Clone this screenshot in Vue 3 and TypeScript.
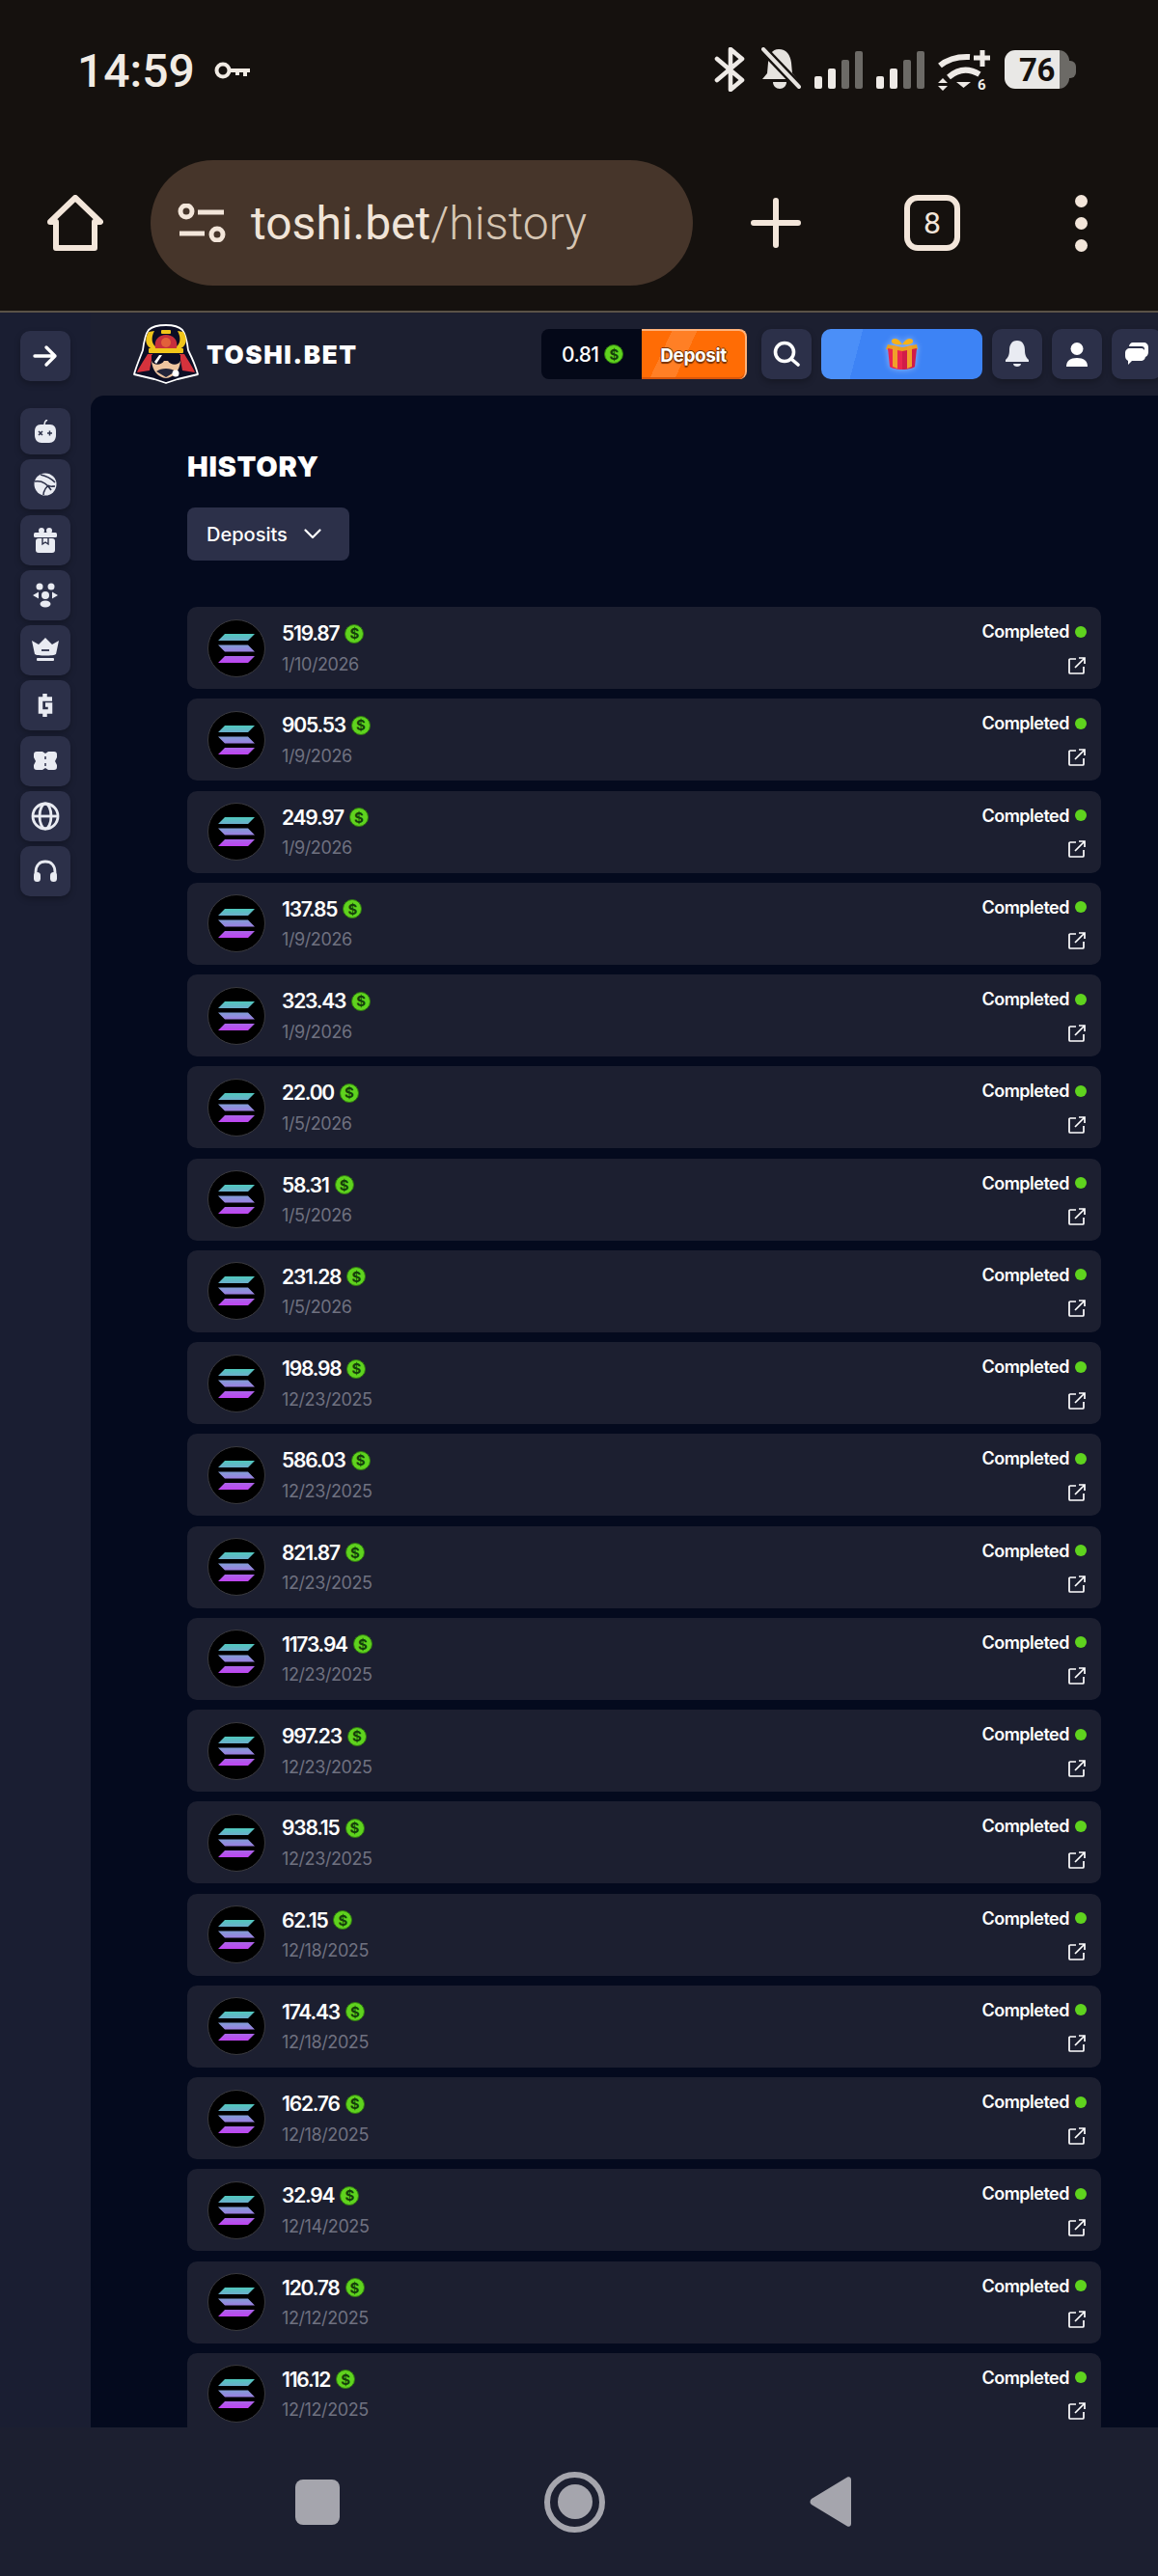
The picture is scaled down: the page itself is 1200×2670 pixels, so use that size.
<script setup lang="ts">
interface Deposito {
  valor: string;
  data: string;
}

const depositos: Deposito[] = [
  { valor: "519.87", data: "1/10/2026" },
  { valor: "905.53", data: "1/9/2026" },
  { valor: "249.97", data: "1/9/2026" },
  { valor: "137.85", data: "1/9/2026" },
  { valor: "323.43", data: "1/9/2026" },
  { valor: "22.00", data: "1/5/2026" },
  { valor: "58.31", data: "1/5/2026" },
  { valor: "231.28", data: "1/5/2026" },
  { valor: "198.98", data: "12/23/2025" },
  { valor: "586.03", data: "12/23/2025" },
  { valor: "821.87", data: "12/23/2025" },
  { valor: "1173.94", data: "12/23/2025" },
  { valor: "997.23", data: "12/23/2025" },
  { valor: "938.15", data: "12/23/2025" },
  { valor: "62.15", data: "12/18/2025" },
  { valor: "174.43", data: "12/18/2025" },
  { valor: "162.76", data: "12/18/2025" },
  { valor: "32.94", data: "12/14/2025" },
  { valor: "120.78", data: "12/12/2025" },
  { valor: "116.12", data: "12/12/2025" },
];
</script>

<template>
  <div class="tela">
    <header class="chrome">
      <div class="status">
        <div class="hora">
          <span>14:59</span>
          <svg width="38" height="20" viewBox="0 0 38 20" fill="none">
            <circle cx="9" cy="10" r="6.5" stroke="#f1ebe4" stroke-width="4" />
            <path d="M15 8h22v4h-3v4h-4v-4h-4v3h-4v-3h-7z" fill="#f1ebe4" />
          </svg>
        </div>
        <div class="status-icones">
          <svg width="32" height="46" viewBox="0 0 32 46" fill="none" stroke="#eeeae6" stroke-width="4.6" stroke-linejoin="round" stroke-linecap="round">
            <path d="M3 12l26 22-12 10V2l12 10L3 34" />
          </svg>
          <svg class="sino" width="41" height="46" viewBox="0 0 41 46" fill="#e6e3df">
            <path d="M18 2c8 0 12 6 13 14l1 11 5 6H1l5-6 1-11C8 8 11 2 18 2z" />
            <path d="M12 36h14c0 4-3 7-7 7s-7-3-7-7z" />
            <path d="M-2 -2l42 44" stroke="#15110e" stroke-width="9" />
            <path d="M2 2l37 39" stroke="#e6e3df" stroke-width="4" stroke-linecap="round" />
          </svg>
          <svg width="50" height="39" viewBox="0 0 50 39">
            <rect x="0" y="26" width="8" height="13" rx="2" fill="#eeeae6" />
            <rect x="14" y="18" width="8" height="21" rx="2" fill="#eeeae6" />
            <rect x="28" y="9" width="8" height="30" rx="2" fill="#6c6a66" />
            <rect x="42" y="0" width="8" height="39" rx="2" fill="#6c6a66" />
          </svg>
          <svg width="50" height="39" viewBox="0 0 50 39">
            <rect x="0" y="26" width="8" height="13" rx="2" fill="#eeeae6" />
            <rect x="14" y="18" width="8" height="21" rx="2" fill="#eeeae6" />
            <rect x="28" y="9" width="8" height="30" rx="2" fill="#6c6a66" />
            <rect x="42" y="0" width="8" height="39" rx="2" fill="#6c6a66" />
          </svg>
          <svg class="wifi" width="55" height="50" viewBox="0 0 55 50" fill="none" stroke="#eeeae6">
            <path d="M2 17Q14 7 33 8" stroke-width="6" />
            <path d="M11 29Q26 16 43 26" stroke-width="6" />
            <path d="M19 34h15l-7.500 6z" fill="#eeeae6" stroke="none" />
            <path d="M5 30l5 5H0zM5 43l5-5H0z" fill="#eeeae6" stroke="none" />
            <path d="M46 1v17M37 9h17" stroke-width="5" />
            <text x="41" y="42" class="seis" fill="#eeeae6" stroke="none">6</text>
          </svg>
          <div class="bateria"><span>76</span></div>
        </div>
      </div>
      <div class="barra">
        <svg class="casa" width="58" height="58" viewBox="0 0 58 58" fill="none" stroke="#f3e6da" stroke-width="6" stroke-linejoin="round">
          <path d="M3 28L29 3l26 25h-6v27H9V28z" />
        </svg>
        <div class="url">
          <svg width="50" height="40" viewBox="0 0 50 40" fill="none" stroke="#f3e6da" stroke-width="5">
            <circle cx="9" cy="8" r="6" />
            <path d="M21 9h27" />
            <path d="M2 31h26" />
            <circle cx="41" cy="32" r="6" />
          </svg>
          <span class="url-texto"><b>toshi.bet</b>/history</span>
        </div>
        <svg class="mais" width="52" height="52" viewBox="0 0 52 52" stroke="#f3e6da" stroke-width="6" stroke-linecap="round">
          <path d="M26 3v46M3 26h46" />
        </svg>
        <div class="abas">8</div>
        <div class="pontos"><i></i><i></i><i></i></div>
      </div>
    </header>

    <div class="site">
      <aside class="lateral">
        <button class="quadrado seta">
          <svg width="26" height="24" viewBox="0 0 26 24" fill="none" stroke="#fff" stroke-width="3.4" stroke-linecap="round" stroke-linejoin="round">
            <path d="M2 12h21M14 3l9 9-9 9" />
          </svg>
        </button>
        <nav class="menu">
          <button class="quadrado">
            <svg width="22" height="24" viewBox="0 0 22 24" fill="#e9ebf2">
              <path d="M6 5h10c4 0 6 3 6 7v4c0 5-3 8-7 8H7c-4 0-7-3-7-8v-4c0-4 2-7 6-7z" />
              <path d="M10 5c0-2 1-4 3-5" stroke="#e9ebf2" stroke-width="1.500" fill="none" />
              <path d="M4 12l4 4M8 12l-4 4M13 14h5M15.500 11.500v5" stroke="#2c3049" stroke-width="1.500" />
            </svg>
          </button>
          <button class="quadrado">
            <svg width="24" height="24" viewBox="0 0 24 24" fill="#e9ebf2">
              <circle cx="12" cy="12" r="11.500" />
              <path d="M1 9c6-1 12 1 17 9M7 2c5 1 11 4 15 8M15 13c-3 3-5 6-5 10M22 14c-3 0-5 1-7-1" stroke="#2c3049" stroke-width="1.600" fill="none" />
            </svg>
          </button>
          <button class="quadrado">
            <svg width="24" height="26" viewBox="0 0 24 26" fill="#e9ebf2">
              <rect x="0" y="5" width="24" height="5" rx="1.500" />
              <rect x="2" y="11" width="20" height="15" rx="3" />
              <circle cx="8" cy="3" r="3" />
              <circle cx="16" cy="3" r="3" />
              <path d="M9 11v6l3-2 3 2v-6" stroke="#2c3049" stroke-width="1.400" fill="none" />
            </svg>
          </button>
          <button class="quadrado">
            <svg width="26" height="26" viewBox="0 0 26 26" fill="#e9ebf2">
              <circle cx="7" cy="4" r="3.500" />
              <circle cx="19" cy="4" r="3.500" />
              <circle cx="13" cy="13" r="4" />
              <path d="M0 13l6-3.500v7zM26 13l-6-3.500v7z" />
              <ellipse cx="13" cy="22" rx="5.500" ry="3.500" />
            </svg>
          </button>
          <button class="quadrado">
            <svg width="28" height="26" viewBox="0 0 28 26" fill="#e9ebf2">
              <path d="M0 3l7 4 7-7 7 7 7-4-3 14c-2 2-20 2-22 0z" />
              <rect x="5" y="21" width="18" height="3" rx="1" />
              <path d="M10 13h8" stroke="#2c3049" stroke-width="1.800" />
            </svg>
          </button>
          <button class="quadrado">
            <svg width="16" height="26" viewBox="0 0 16 26" fill="none" stroke="#e9ebf2" stroke-width="4.500">
              <path d="M15 6.500H3v13h10v-7H8M7.500 1v5M7.500 20v5" />
            </svg>
          </button>
          <button class="quadrado">
            <svg width="24" height="20" viewBox="0 0 24 20" fill="#e9ebf2">
              <path d="M3 0h6l3 2 3-2h6c2 0 3 1 3 3v3l-2 4 2 4v2c0 2-1 3-3 3h-6l-3-2-3 2H3c-2 0-3-1-3-3v-2l2-4-2-4V3c0-2 1-3 3-3z" />
              <path d="M12 5v3M12 12v3" stroke="#2c3049" stroke-width="1.500" />
            </svg>
          </button>
          <button class="quadrado">
            <svg width="30" height="30" viewBox="0 0 30 30" fill="none" stroke="#e9ebf2" stroke-width="2.800">
              <circle cx="15" cy="15" r="13" />
              <ellipse cx="15" cy="15" rx="6" ry="13" />
              <path d="M2 15h26" />
            </svg>
          </button>
          <button class="quadrado">
            <svg width="26" height="24" viewBox="0 0 26 24" fill="none" stroke="#e9ebf2" stroke-width="2.800">
              <path d="M3 16v-3C3 6 7 2 13 2s10 4 10 11v3" />
              <rect x="1" y="13" width="7" height="10" rx="3.500" fill="#e9ebf2" stroke="none" />
              <rect x="18" y="13" width="7" height="10" rx="3.500" fill="#e9ebf2" stroke="none" />
            </svg>
          </button>
        </nav>
      </aside>

      <div class="direita">
        <div class="topo">
          <div class="marca">
            <svg width="68" height="62" viewBox="8 6 68 62">
              <path d="M42 7C50 7 55 8 59 12 63 17 64 25 65 33 69 41 73 50 75 58L54 63 42 67 30 63 9 58C11 50 15 41 18 33 19 25 20 17 24 12 28 8 34 7 42 7z" fill="#0b0d24" stroke="#fff" stroke-width="1.800" stroke-linejoin="round" />
              <path d="M24 14C19 22 21 30 29 32L33 30C27 28 26 20 30 13z" fill="#f0c419" />
              <path d="M60 14C65 22 63 30 55 32L51 30C57 28 58 20 54 13z" fill="#f0c419" />
              <rect x="37" y="12" width="10" height="4" rx="1" fill="#f0c419" />
              <path d="M31 31C29 22 35 17 42 17 49 17 55 22 53 31z" fill="#c62f3c" />
              <circle cx="42" cy="25" r="5" fill="#e2603a" />
              <rect x="24" y="31" width="36" height="5" rx="1" fill="#f0c419" />
              <path d="M23 37C18 45 14 51 12 56L25 54 28 37z" fill="#d5323c" />
              <path d="M61 37C66 45 70 51 72 56L59 54 56 37z" fill="#d5323c" />
              <path d="M27 44C28 55 34 61 42 62 50 61 56 55 57 44z" fill="#eec5a0" />
              <path d="M27 38H57V44C55 49 47 49 44 44H40C37 49 29 49 27 44z" fill="#0b0d24" />
              <path d="M30 45L35 38H38L32 47z" fill="#fff" />
              <path d="M32 55C37 51 47 51 52 55L42 61z" fill="#22243a" />
              <circle cx="52" cy="57" r="3.500" fill="#fff" />
            </svg>
            <span class="marca-nome">TOSHI.BET</span>
          </div>
          <div class="saldo">
            <div class="saldo-valor">
              <span>0.81</span>
              <span class="moeda">$</span>
            </div>
            <button class="depositar">Deposit</button>
          </div>
          <button class="quadrado">
            <svg width="28" height="28" viewBox="0 0 28 28" fill="none" stroke="#fff" stroke-width="3.600" stroke-linecap="round">
              <circle cx="12" cy="12" r="9.500" />
              <path d="M19 19l7 6" />
            </svg>
          </button>
          <button class="presente">
            <svg width="36" height="34" viewBox="0 0 36 34">
              <path d="M18 7C14 0 8 0 7 3s5 5 11 4zM18 7c4-7 10-7 11-4s-5 5-11 4z" fill="#f7b21a" />
              <path d="M3 7l15 3 15-3 1 5-16 3-17-3z" fill="#e9a020" />
              <path d="M3 11l15 3v19C11 33 6 31 5 30z" fill="#e8264f" />
              <path d="M33 11l-15 3v19c7 0 12-2 13-3z" fill="#d11c48" />
              <path d="M8 8l5 1v23l-5-2zM23 9l5-1v22l-5 2z" fill="#f0a02a" />
            </svg>
          </button>
          <button class="quadrado">
            <svg width="24" height="28" viewBox="0 0 24 28" fill="#e9ebf2">
              <path d="M12 0c6 0 8 5 8 10 0 6 2 8 4 10v2H0v-2c2-2 4-4 4-10 0-5 2-10 8-10z" />
              <path d="M8 24h8c0 2-2 3-4 3s-4-1-4-3z" />
            </svg>
          </button>
          <button class="quadrado">
            <svg width="22" height="25" viewBox="0 0 22 25" fill="#fff">
              <circle cx="11" cy="6.500" r="6.500" />
              <path d="M0 25c0-6 4-9 11-9s11 3 11 9z" />
            </svg>
          </button>
          <button class="quadrado">
            <svg width="24" height="24" viewBox="0 0 24 24" fill="#fff">
              <path d="M8 0h11c3 0 5 2 5 5v5c0 3-2 5-4 5V7c0-2-1-3-3-3H4c0-2 2-4 4-4z" />
              <path d="M5 6h11c3 0 5 2 5 5v3c0 3-2 5-5 5H7l-4 4v-4c-2-1-3-3-3-5v-3c0-3 2-5 5-5z" />
            </svg>
          </button>
        </div>

        <main class="conteudo">
          <h1>HISTORY</h1>
          <button class="filtro">
            <span>Deposits</span>
            <svg width="18" height="11" viewBox="0 0 18 11" fill="none" stroke="#fff" stroke-width="2.200" stroke-linecap="round" stroke-linejoin="round">
              <path d="M1.500 1.500L9 9l7.500-7.500" />
            </svg>
          </button>

          <ul class="lista">
            <li v-for="d in depositos" :key="d.valor" class="linha">
              <div class="solana">
                <svg width="38" height="30" viewBox="0 0 38 30">
                  <defs>
                    <linearGradient id="sol" gradientUnits="userSpaceOnUse" x1="0" y1="0" x2="0" y2="30">
                      <stop offset="0" stop-color="#4fc9bd" />
                      <stop offset="0.5" stop-color="#8f8fdc" />
                      <stop offset="1" stop-color="#c043f2" />
                    </linearGradient>
                  </defs>
                  <path d="M7 0h31l-7 7H0zM0 11.500h31l7 7H7zM7 23h31l-7 7H0z" fill="url(#sol)" />
                </svg>
              </div>
              <div class="info">
                <div class="valor">
                  <span>{{ d.valor }}</span>
                  <span class="moeda">$</span>
                </div>
                <div class="data">{{ d.data }}</div>
              </div>
              <div class="estado">
                <div class="completo">
                  <span>Completed</span>
                  <i class="ponto"></i>
                </div>
                <svg class="externo" width="18" height="18" viewBox="0 0 18 18" fill="none" stroke="#fff" stroke-width="1.700">
                  <path d="M8 2H2a1 1 0 0 0-1 1v13a1 1 0 0 0 1 1h13a1 1 0 0 0 1-1v-6" />
                  <path d="M7 11L17 1M11 1h6v6" />
                </svg>
              </div>
            </li>
          </ul>
        </main>
      </div>
    </div>

    <footer class="navegacao">
      <div class="nav-quadrado"></div>
      <div class="nav-circulo"><i></i></div>
      <svg width="43" height="54" viewBox="0 0 44 54" fill="#a5a5ad">
        <path d="M40 1c2-1 4 0 4 3v46c0 3-2 4-4 3L2 30c-2-1-2-4 0-6z" />
      </svg>
    </footer>
  </div>
</template>

<style>
html,
body {
  margin: 0;
  background: #1c1f30;
}
</style>

<style scoped>
.tela {
  width: 1200px;
  height: 2670px;
  display: flex;
  flex-direction: column;
  overflow: hidden;
  font-family: Inter, "Liberation Sans", sans-serif;
  color: #fff;
  background: #1c1f30;
}

button {
  border: 0;
  padding: 0;
  font-family: inherit;
  color: inherit;
}

.chrome {
  height: 324px;
  flex: none;
  box-sizing: border-box;
  background: #15110e;
  border-bottom: 2px solid #5a5247;
}

.status {
  height: 156px;
  box-sizing: border-box;
  padding: 46px 85px 0 80px;
  display: flex;
  justify-content: space-between;
  align-items: flex-start;
}

.hora {
  display: flex;
  align-items: center;
  gap: 20px;
  height: 54px;
  font-family: Roboto, sans-serif;
  font-size: 48px;
  font-weight: 500;
  color: #f1ebe4;
}

.status-icones {
  display: flex;
  align-items: center;
  gap: 14px;
  height: 52px;
}

.sino {
  margin-left: 3px;
}

.wifi {
  margin-top: 7px;
}

.seis {
  font-family: Roboto, sans-serif;
  font-size: 15px;
  font-weight: 700;
}

.bateria {
  position: relative;
  width: 67px;
  height: 40px;
  margin-right: 7px;
  box-sizing: border-box;
  padding-left: 15px;
  border-radius: 11px;
  background: linear-gradient(90deg, #e9e8e6 57px, #6c6a66 57px);
  color: #15110e;
  font-family: Roboto, sans-serif;
  font-size: 33px;
  font-weight: 700;
  letter-spacing: -0.5px;
  display: flex;
  align-items: center;
}

.bateria::after {
  content: "";
  position: absolute;
  left: 67px;
  top: 11px;
  width: 7px;
  height: 18px;
  border-radius: 0 6px 6px 0;
  background: #6c6a66;
}

.barra {
  height: 150px;
  display: flex;
  align-items: center;
  padding: 0 0 0 49px;
}

.url {
  margin-left: 49px;
  width: 562px;
  height: 130px;
  box-sizing: border-box;
  border-radius: 65px;
  background: #46352a;
  display: flex;
  align-items: center;
  gap: 26px;
  padding-left: 28px;
}

.url-texto {
  font-family: Roboto, sans-serif;
  font-size: 48px;
  font-weight: 300;
  color: #d6c6b4;
}

.url-texto b {
  font-weight: 400;
  color: #f0e4d8;
}

.mais {
  margin-left: 60px;
}

.abas {
  margin-left: 107px;
  width: 58px;
  height: 58px;
  box-sizing: border-box;
  border: 6px solid #f3e6da;
  border-radius: 14px;
  display: flex;
  align-items: center;
  justify-content: center;
  font-family: Roboto, sans-serif;
  font-size: 32px;
  color: #f3e6da;
}

.pontos {
  margin-left: 119px;
  display: flex;
  flex-direction: column;
  gap: 10px;
}

.pontos i {
  display: block;
  width: 13px;
  height: 13px;
  border-radius: 50%;
  background: #f3e6da;
}

.site {
  flex: 1;
  min-height: 0;
  display: flex;
}

.lateral {
  width: 94px;
  flex: none;
  box-sizing: border-box;
  padding: 19px 0 0 21px;
  background: #1a1e32;
}

.quadrado {
  width: 52px;
  height: 52px;
  flex: none;
  border-radius: 10px;
  background: #2c3049;
  box-shadow: 0 3px 6px rgba(0, 0, 0, 0.25);
  display: flex;
  align-items: center;
  justify-content: center;
}

.menu {
  margin-top: 28px;
  display: flex;
  flex-direction: column;
  gap: 5.3px;
}

.menu .quadrado:first-child {
  height: 48px;
}

.direita {
  flex: 1;
  min-width: 0;
  display: flex;
  flex-direction: column;
}

.topo {
  height: 86px;
  flex: none;
  box-sizing: border-box;
  padding-left: 44px;
  display: flex;
  align-items: center;
  gap: 10px;
  overflow: hidden;
  background: #1c1f30;
}

.marca {
  flex: none;
  display: flex;
  align-items: center;
  gap: 8px;
  width: 413px;
}

.marca-nome {
  font-size: 26px;
  font-weight: 900;
  letter-spacing: 1.6px;
}

.saldo {
  flex: none;
  display: flex;
  height: 52px;
  margin-right: 5px;
}

.saldo-valor {
  width: 104px;
  box-sizing: border-box;
  padding-left: 21px;
  display: flex;
  align-items: center;
  gap: 6px;
  border-radius: 8px 0 0 8px;
  background: #040818;
  font-size: 21px;
  font-weight: 500;
  letter-spacing: -0.6px;
}

.moeda {
  width: 20px;
  height: 20px;
  flex: none;
  box-sizing: border-box;
  border: 1px solid #2f7a10;
  border-radius: 50%;
  background: #5fd31e;
  color: #14400a;
  font-size: 15px;
  font-weight: 700;
  letter-spacing: 0;
  display: flex;
  align-items: center;
  justify-content: center;
}

.depositar {
  width: 109px;
  border-radius: 0 8px 8px 0;
  background: linear-gradient(115deg, #ff6c05 24%, #ff7f25 24%, #ff7f25 44%, #ff6c05 44%);
  border-top: 2px solid #ffb27a;
  border-right: 2px solid #ffb27a;
  box-shadow: inset 0 -2px 0 #d9560a;
  box-sizing: border-box;
  font-size: 19px;
  font-weight: 700;
  letter-spacing: -0.4px;
  text-shadow: 0 1px 0 #7c3300, 1px 0 0 #7c3300, -1px 0 0 #7c3300, 0 -1px 0 #7c3300, 0 2px 1px #7c3300;
}

.presente {
  width: 167px;
  height: 52px;
  flex: none;
  border-radius: 10px;
  background: linear-gradient(105deg, #4b8ff8 24%, #3d83f5 24%);
  display: flex;
  align-items: center;
  justify-content: center;
}

.presente svg {
  filter: drop-shadow(0 0 3px rgba(255, 255, 255, 0.45));
}

.conteudo {
  flex: 1;
  min-height: 0;
  overflow: hidden;
  box-sizing: border-box;
  padding: 56px 59px 0 100px;
  background: #040a1e;
  border-radius: 14px 0 0 0;
}

h1 {
  margin: 0;
  height: 36px;
  font-size: 29px;
  line-height: 36px;
  font-weight: 900;
  letter-spacing: 0.7px;
}

.filtro {
  margin-top: 24px;
  width: 168px;
  height: 55px;
  box-sizing: border-box;
  padding-left: 20px;
  border-radius: 8px;
  background: #2c3049;
  display: flex;
  align-items: center;
  gap: 17px;
  font-size: 20px;
  font-weight: 500;
}

.lista {
  list-style: none;
  margin: 48px 0 0;
  padding: 0;
  display: flex;
  flex-direction: column;
  gap: 10.260px;
}

.linha {
  height: 85px;
  flex: none;
  box-sizing: border-box;
  padding: 0 15px 0 21px;
  border-radius: 10px;
  background: #1c1f30;
  display: flex;
  align-items: center;
}

.solana {
  width: 60px;
  height: 60px;
  flex: none;
  box-sizing: border-box;
  border-radius: 50%;
  border: 1px solid #3a3a3f;
  background: #000;
  display: flex;
  align-items: center;
  justify-content: center;
}

.info {
  margin-left: 17px;
  display: flex;
  flex-direction: column;
  gap: 8px;
}

.valor {
  height: 26px;
  display: flex;
  align-items: center;
  gap: 5px;
  font-size: 21px;
  font-weight: 600;
  letter-spacing: -1.2px;
}

.valor .moeda {
  margin-left: 1px;
}

.data {
  font-size: 18px;
  line-height: 22px;
  letter-spacing: -0.4px;
  color: #6f7180;
}

.estado {
  margin-left: auto;
  padding-bottom: 2px;
  display: flex;
  flex-direction: column;
  align-items: flex-end;
  gap: 14px;
}

.completo {
  display: flex;
  align-items: center;
  gap: 6px;
  height: 24px;
  font-size: 18px;
  font-weight: 600;
  letter-spacing: -0.5px;
}

.ponto {
  width: 12px;
  height: 12px;
  border-radius: 50%;
  background: #5fd31e;
}

.externo {
  margin-right: 1px;
}

.navegacao {
  height: 154px;
  flex: none;
  box-sizing: border-box;
  padding-left: 306px;
  background: #1c1f30;
  display: flex;
  align-items: center;
  gap: 212px;
}

.nav-quadrado {
  width: 46px;
  height: 47px;
  border-radius: 8px;
  background: #a5a5ad;
}

.nav-circulo {
  width: 63px;
  height: 63px;
  box-sizing: border-box;
  border: 6px solid #a5a5ad;
  border-radius: 50%;
  display: flex;
  align-items: center;
  justify-content: center;
}

.nav-circulo i {
  display: block;
  width: 36px;
  height: 36px;
  border-radius: 50%;
  background: #a5a5ad;
}
</style>
